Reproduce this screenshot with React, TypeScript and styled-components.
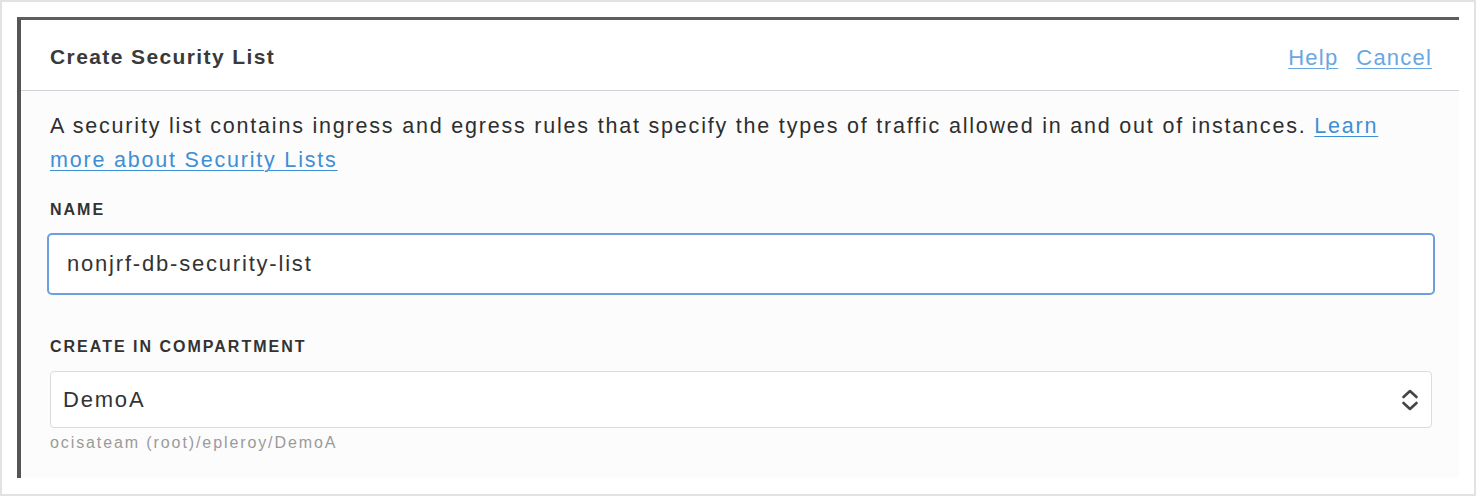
import styled, { createGlobalStyle } from 'styled-components';

const GlobalStyle = createGlobalStyle`
  html, body {
    margin: 0;
    padding: 0;
    background: #fff;
  }
  body {
    font-family: "Liberation Sans", Arial, Helvetica, sans-serif;
    color: #333;
  }
`;

const Frame = styled.div`
  box-sizing: border-box;
  width: 1476px;
  height: 496px;
  border: 2px solid #e2e2e2;
  background: #fff;
  padding: 15px 15px 0 15px;
  overflow: hidden;
`;

const Panel = styled.div`
  box-sizing: border-box;
  width: 1442px;
  height: 461px;
  border-top: 3px solid #5e5e5e;
  border-left: 4px solid #555;
  background: #fcfcfc;
  display: flex;
  flex-direction: column;
`;

const Header = styled.div`
  height: 71px;
  box-sizing: border-box;
  display: flex;
  align-items: center;
  justify-content: space-between;
  padding: 3px 27px 0 29px;
  border-bottom: 1px solid #cdd1d8;
  background: #fff;
`;

const Title = styled.h2`
  margin: 0;
  font-size: 21px;
  font-weight: bold;
  color: #3a3a3a;
  letter-spacing: 1.4px;
`;

const Actions = styled.div`
  display: flex;
  gap: 18px;
  margin-top: 3px;
`;

const HeaderLink = styled.a`
  font-size: 22px;
  color: #6aa6e2;
  text-decoration: underline;
  text-decoration-thickness: 1px;
  text-underline-offset: 3px;
  letter-spacing: 1.2px;
  cursor: pointer;
`;

const Body = styled.div`
  padding: 18px 27px 0 29px;
`;

const Intro = styled.p`
  margin: 0;
  font-size: 21.5px;
  line-height: 34px;
  letter-spacing: 1.8px;
  color: #2e2e2e;
`;

const InlineLink = styled.a`
  color: #3d8fd6;
  text-decoration: underline;
  text-decoration-thickness: 1px;
  text-underline-offset: 3px;
  cursor: pointer;
`;

const Field = styled.div<{ $top: number }>`
  margin-top: ${(p) => p.$top}px;
`;

const Label = styled.div<{ $gap: number }>`
  font-size: 16px;
  line-height: 18px;
  font-weight: bold;
  color: #333;
  text-transform: uppercase;
  letter-spacing: 2px;
  margin-bottom: ${(p) => p.$gap}px;
`;

const TextInput = styled.div`
  box-sizing: border-box;
  margin-left: -3px;
  width: 1388px;
  height: 62px;
  border: 2.5px solid #6b9fe2;
  border-radius: 5px;
  background: #fff;
  display: flex;
  align-items: center;
  padding-left: 18px;
  font-size: 22px;
  letter-spacing: 1.8px;
  color: #333;
`;

const Select = styled.div`
  box-sizing: border-box;
  width: 1382px;
  height: 57px;
  border: 1px solid #dcdcdc;
  border-radius: 4px;
  background: #fff;
  display: flex;
  align-items: center;
  justify-content: space-between;
  padding: 0 12px 0 12px;
  font-size: 22px;
  letter-spacing: 1.8px;
  color: #333;
`;

const Hint = styled.div`
  margin-top: 6px;
  font-size: 16px;
  line-height: 18px;
  letter-spacing: 1.9px;
  color: #9a9a9a;
`;

function UpDown() {
  return (
    <svg width="18" height="26" viewBox="0 0 18 26" fill="none">
      <path d="M2.5 10L9 4L15.5 10" stroke="#444" strokeWidth="2.6" strokeLinecap="round" strokeLinejoin="round" />
      <path d="M2.5 16L9 22L15.5 16" stroke="#444" strokeWidth="2.6" strokeLinecap="round" strokeLinejoin="round" />
    </svg>
  );
}

export default function App() {
  return (
    <>
      <GlobalStyle />
      <Frame>
        <Panel>
          <Header>
            <Title>Create Security List</Title>
            <Actions>
              <HeaderLink>Help</HeaderLink>
              <HeaderLink>Cancel</HeaderLink>
            </Actions>
          </Header>
          <Body>
            <Intro>
              A security list contains ingress and egress rules that specify the types of traffic allowed in and out of
              instances. <InlineLink>Learn more about Security Lists</InlineLink>
            </Intro>
            <Field $top={24}>
              <Label $gap={14}>Name</Label>
              <TextInput>nonjrf-db-security-list</TextInput>
            </Field>
            <Field $top={43}>
              <Label $gap={15}>Create in Compartment</Label>
              <Select>
                <span>DemoA</span>
                <UpDown />
              </Select>
              <Hint>ocisateam (root)/epleroy/DemoA</Hint>
            </Field>
          </Body>
        </Panel>
      </Frame>
    </>
  );
}
